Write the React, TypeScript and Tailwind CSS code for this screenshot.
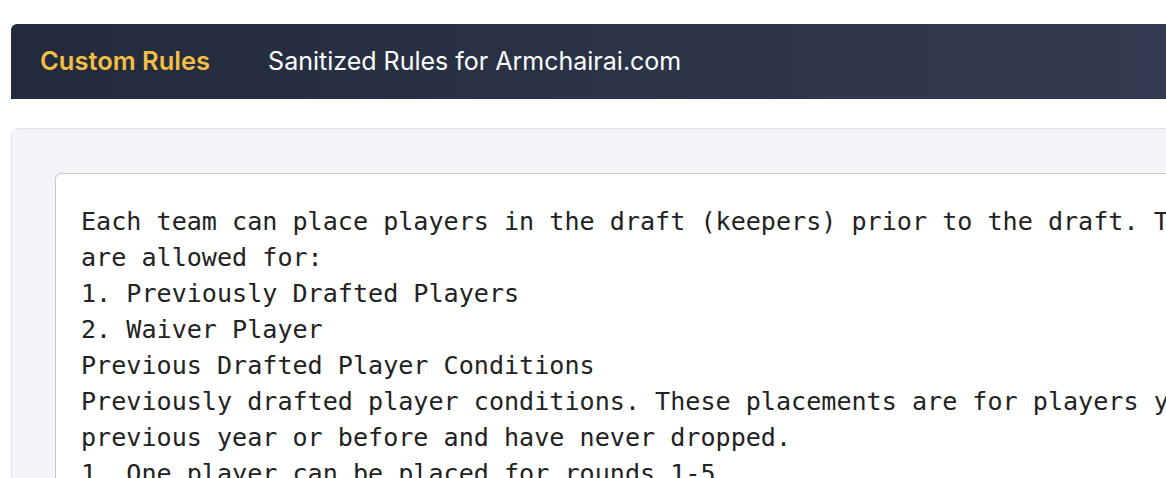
const rulesText = `Each team can place players in the draft (keepers) prior to the draft. These placements
are allowed for:
1. Previously Drafted Players
2. Waiver Player
Previous Drafted Player Conditions
Previously drafted player conditions. These placements are for players you drafted in the
previous year or before and have never dropped.
1. One player can be placed for rounds 1-5
2. One player can be placed for rounds 6-10`;

const App = () => {
  return (
    <div className="h-screen w-full overflow-hidden bg-white font-['Inter',sans-serif]">
      <div className="w-[1220px] pt-6 pl-[11px]">
        {/* top bar */}
        <div className="flex h-[75px] items-center rounded-tl-md bg-gradient-to-r from-[#222a3c] to-[#353c51] pl-[29px]">
          <span className="text-[25.5px] font-semibold text-[#f2bf42]">Custom Rules</span>
          <span className="ml-[58px] text-[25px] text-white">Sanitized Rules for Armchairai.com</span>
        </div>

        {/* rules panel */}
        <div className="mt-[29px] rounded-tl-lg border border-[#e1e3ea] bg-[#f3f4f8] pl-[43px] pt-[44px]">
          <div className="rounded-tl-md border border-[#c9c9cc] bg-white px-[25px] pt-[30px] pb-6">
            <pre className="whitespace-pre font-['DejaVu_Sans_Mono',monospace] text-[25.1px] leading-[36px] text-[#222222]">
              {rulesText}
            </pre>
          </div>
        </div>
      </div>
    </div>
  );
};

export default App;
